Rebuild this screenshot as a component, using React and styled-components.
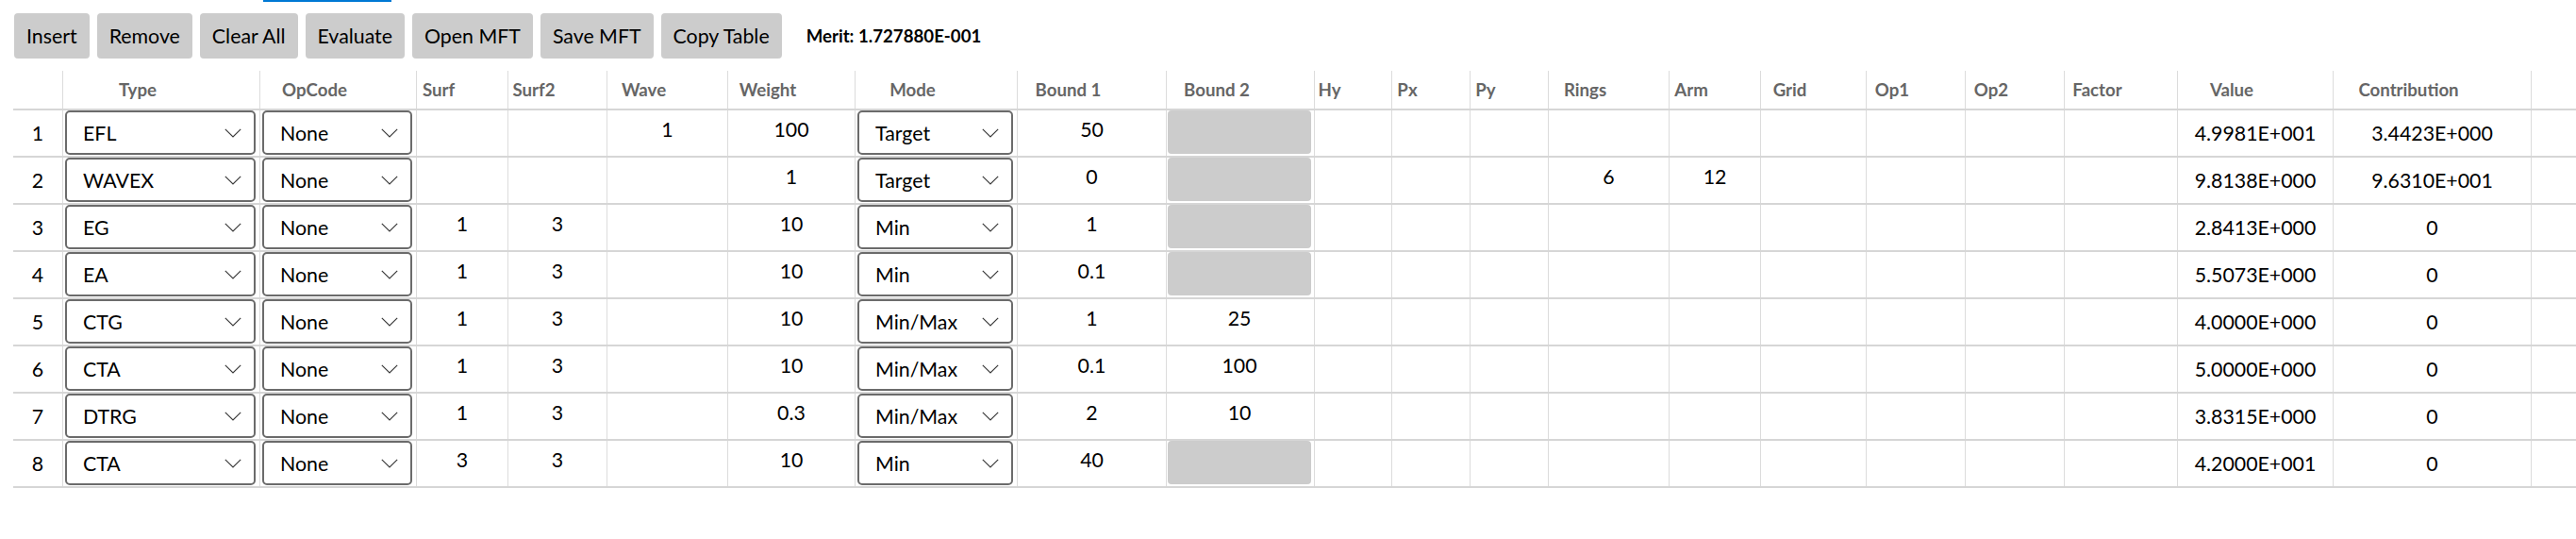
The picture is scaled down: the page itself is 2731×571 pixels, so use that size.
import React from "react";
import styled, { createGlobalStyle } from "styled-components";

const GlobalStyle = createGlobalStyle`
  html, body {
    margin: 0;
    background: #ffffff;
  }
  body {
    font-family: Lato, "Open Sans", sans-serif;
    color: #000;
    overflow: hidden;
  }
`;

const columns = [
  { key: "index", label: "", w: 52, kind: "index" },
  { key: "type", label: "Type", w: 209, kind: "select" },
  { key: "opcode", label: "OpCode", w: 166, kind: "select" },
  { key: "surf", label: "Surf", w: 97, kind: "field" },
  { key: "surf2", label: "Surf2", w: 105, kind: "field" },
  { key: "wave", label: "Wave", w: 128, kind: "field" },
  { key: "weight", label: "Weight", w: 135, kind: "field" },
  { key: "mode", label: "Mode", w: 172, kind: "select" },
  { key: "b1", label: "Bound 1", w: 158, kind: "field" },
  { key: "b2", label: "Bound 2", w: 157, kind: "bound" },
  { key: "hy", label: "Hy", w: 82, kind: "field" },
  { key: "px", label: "Px", w: 83, kind: "field" },
  { key: "py", label: "Py", w: 83, kind: "field" },
  { key: "rings", label: "Rings", w: 128, kind: "field" },
  { key: "arm", label: "Arm", w: 97, kind: "field" },
  { key: "grid", label: "Grid", w: 112, kind: "field" },
  { key: "op1", label: "Op1", w: 105, kind: "field" },
  { key: "op2", label: "Op2", w: 105, kind: "field" },
  { key: "factor", label: "Factor", w: 120, kind: "field" },
  { key: "value", label: "Value", w: 165, kind: "text" },
  { key: "contrib", label: "Contribution", w: 210, kind: "text" },
  { key: "extra", label: "", w: 80, kind: "empty" },
];

const template = columns.map((c) => `${c.w}px`).join(" ");
const tableWidth = columns.reduce((s, c) => s + c.w, 0);

const rows = [
  { type: "EFL", opcode: "None", wave: "1", weight: "100", mode: "Target", b1: "50", value: "4.9981E+001", contrib: "3.4423E+000" },
  { type: "WAVEX", opcode: "None", weight: "1", mode: "Target", b1: "0", rings: "6", arm: "12", value: "9.8138E+000", contrib: "9.6310E+001" },
  { type: "EG", opcode: "None", surf: "1", surf2: "3", weight: "10", mode: "Min", b1: "1", value: "2.8413E+000", contrib: "0" },
  { type: "EA", opcode: "None", surf: "1", surf2: "3", weight: "10", mode: "Min", b1: "0.1", value: "5.5073E+000", contrib: "0" },
  { type: "CTG", opcode: "None", surf: "1", surf2: "3", weight: "10", mode: "Min/Max", b1: "1", b2: "25", value: "4.0000E+000", contrib: "0" },
  { type: "CTA", opcode: "None", surf: "1", surf2: "3", weight: "10", mode: "Min/Max", b1: "0.1", b2: "100", value: "5.0000E+000", contrib: "0" },
  { type: "DTRG", opcode: "None", surf: "1", surf2: "3", weight: "0.3", mode: "Min/Max", b1: "2", b2: "10", value: "3.8315E+000", contrib: "0" },
  { type: "CTA", opcode: "None", surf: "3", surf2: "3", weight: "10", mode: "Min", b1: "40", value: "4.2000E+001", contrib: "0" },
];

const buttons = ["Insert", "Remove", "Clear All", "Evaluate", "Open MFT", "Save MFT", "Copy Table"];

const Page = styled.div`
  padding-left: 14px;
`;

const TabStrip = styled.div`
  height: 2px;
  display: flex;
`;

const TabMarker = styled.div`
  margin-left: 265px;
  width: 136px;
  background: #0078d4;
`;

const Toolbar = styled.div`
  display: flex;
  align-items: center;
  gap: 8px;
  margin: 12px 0 0 1px;
  height: 48px;
`;

const ToolButton = styled.button`
  height: 48px;
  padding: 0 13px;
  border: none;
  border-radius: 4px;
  background: #cccccc;
  color: #000;
  font-family: inherit;
  font-size: 21.33px;
  cursor: pointer;
`;

const Merit = styled.span`
  margin-left: 18px;
  font-size: 18.67px;
  font-weight: 700;
`;

const Sheet = styled.div`
  margin-top: 13px;
  overflow: hidden;
`;

const Row = styled.div`
  display: grid;
  grid-template-columns: ${template};
  width: ${tableWidth}px;
  height: ${(p) => (p.$head ? 40 : 48)}px;
  border-bottom: 2px solid #d6d6d6;
`;

const Cell = styled.div`
  display: flex;
  justify-content: center;
  align-items: ${(p) => (p.$top ? "flex-start" : "center")};
  border-left: ${(p) => (p.$first ? "none" : "1px solid #dcdcdc")};
  padding: ${(p) => p.$pad || "0"};
  min-width: 0;
  box-sizing: border-box;
  font-size: 21.33px;
`;

const HeadLabel = styled.span`
  padding-right: 50px;
  font-size: 18.67px;
  font-weight: 700;
  color: #666666;
  white-space: nowrap;
`;

const SelectBox = styled.div`
  flex: 1;
  height: 47px;
  box-sizing: border-box;
  display: flex;
  align-items: center;
  justify-content: space-between;
  padding: 0 13px 0 17px;
  border: 2px solid #6b6b6b;
  border-radius: 5px;
  background: #ffffff;
  font-size: 21.33px;
`;

const Field = styled.div`
  flex: 1;
  height: 46px;
  line-height: 40px;
  text-align: center;
  border-radius: 4px;
  background: ${(p) => (p.$disabled ? "#cccccc" : "transparent")};
`;

const Chevron = () => (
  <svg width="18" height="10" viewBox="0 0 18 10" fill="none">
    <polyline points="0.8,0.8 9,9 17.2,0.8" stroke="#3a3a3a" strokeWidth="1.2" />
  </svg>
);

function renderCell(col, row, index) {
  const v = row[col.key] || "";
  switch (col.kind) {
    case "index":
      return <Cell key={col.key} $first>{index + 1}</Cell>;
    case "select":
      return (
        <Cell key={col.key} $top $pad="0 4px 0 2px">
          <SelectBox>
            <span>{v}</span>
            <Chevron />
          </SelectBox>
        </Cell>
      );
    case "field":
      return (
        <Cell key={col.key} $top>
          <Field>{v}</Field>
        </Cell>
      );
    case "bound":
      return (
        <Cell key={col.key} $top $pad="0 3px 0 1px">
          <Field $disabled={row.mode !== "Min/Max"}>{v}</Field>
        </Cell>
      );
    case "text":
      return <Cell key={col.key}>{v}</Cell>;
    default:
      return <Cell key={col.key} />;
  }
}

export default function App() {
  return (
    <Page>
      <GlobalStyle />
      <TabStrip>
        <TabMarker />
      </TabStrip>
      <Toolbar>
        {buttons.map((b) => (
          <ToolButton key={b}>{b}</ToolButton>
        ))}
        <Merit>Merit: 1.727880E-001</Merit>
      </Toolbar>
      <Sheet>
        <Row $head>
          {columns.map((c, i) => (
            <Cell key={c.key} $first={i === 0}>
              {c.label && <HeadLabel>{c.label}</HeadLabel>}
            </Cell>
          ))}
        </Row>
        {rows.map((r, i) => (
          <Row key={i}>{columns.map((c) => renderCell(c, r, i))}</Row>
        ))}
      </Sheet>
    </Page>
  );
}
